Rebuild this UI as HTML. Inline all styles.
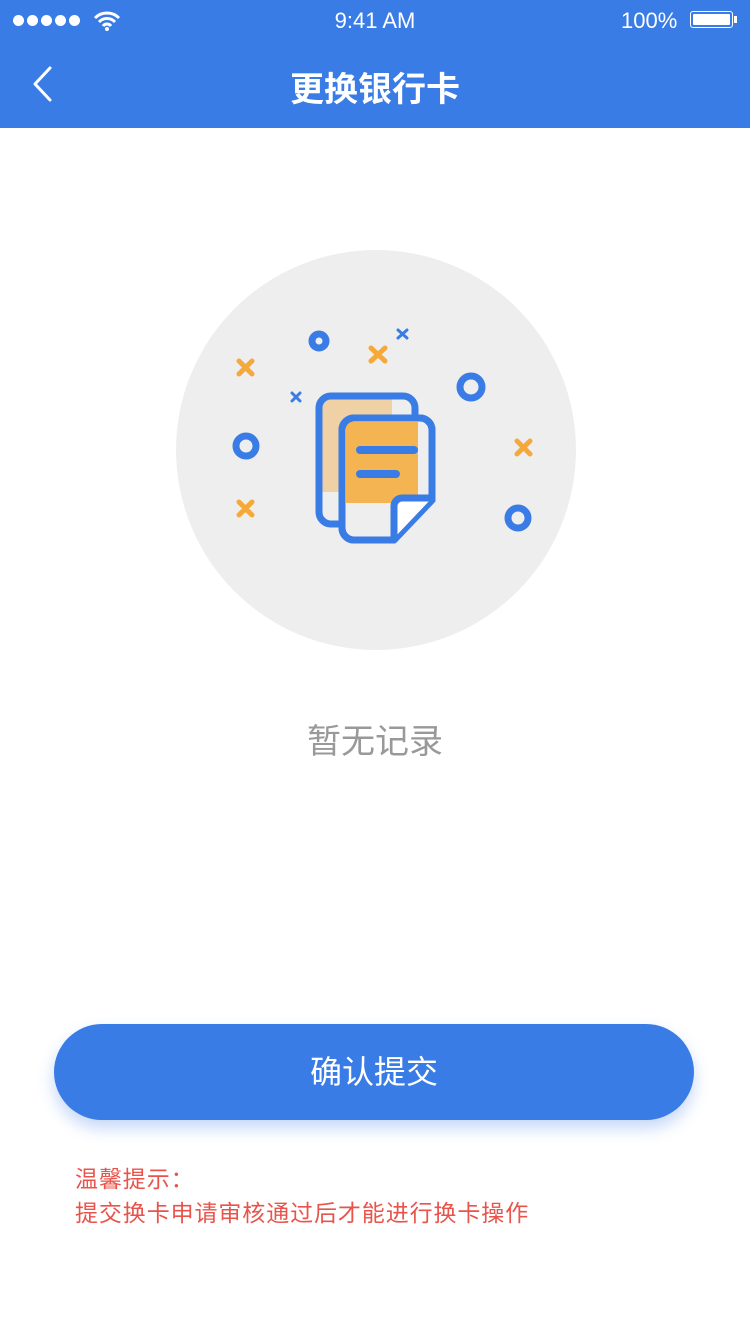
<!DOCTYPE html>
<html><head><meta charset="utf-8"><style>
body{margin:0;width:750px;height:1334px;background:#fff;font-family:"Liberation Sans","Noto Sans CJK SC",sans-serif;position:relative;overflow:hidden}
.top{position:absolute;left:0;top:0;width:750px;height:128px;background:#3a7ce5;color:#fff}
.abs{position:absolute}
.d{position:absolute;top:15px;width:11px;height:11px;border-radius:50%;background:#fff}
</style></head><body>
<div class="top">
 <div class="d" style="left:13px"></div><div class="d" style="left:27px"></div><div class="d" style="left:41px"></div><div class="d" style="left:55px"></div><div class="d" style="left:69px"></div>
 <svg class="abs" style="left:93px;top:10px" width="28" height="22" viewBox="0 0 28 22"><path d="M2 8a17 17 0 0 1 24 0M6 12a11 11 0 0 1 16 0M10 16a5 5 0 0 1 8 0" stroke="#fff" stroke-width="3" fill="none"/><circle cx="14" cy="19" r="2" fill="#fff"/></svg>
 <div class="abs" style="left:0;width:750px;top:8px;text-align:center;font-size:22px">9:41 AM</div>
 <div class="abs" style="left:621px;top:8px;font-size:22px">100%</div>
 <div class="abs" style="left:690px;top:11px;width:43px;height:17px;border:1.5px solid #fff;border-radius:3px;box-sizing:border-box;padding:2px"><div style="background:#fff;height:100%;border-radius:1px"></div></div>
 <div class="abs" style="left:734px;top:16px;width:3px;height:7px;background:#fff"></div>
 <svg class="abs" style="left:30px;top:66px" width="24" height="36"><path d="M20 2L5 18L20 34" stroke="#fff" stroke-width="3" fill="none" stroke-linecap="round" stroke-linejoin="round"/></svg>
 <div class="abs" style="left:0;width:750px;top:62px;text-align:center;font-size:34px;font-weight:bold">更换银行卡</div>
</div>
<svg class="abs" style="left:0;top:0" width="750" height="700">
 <circle cx="376" cy="450" r="200" fill="#eeeeee"/>
 <g stroke="#f5a93a" stroke-width="5" stroke-linecap="round">
  <path d="M239 361l13 13M252 361l-13 13M371 348l14 13M385 348l-14 13M239 502l13 13M252 502l-13 13M517 441l13 13M530 441l-13 13"/>
 </g>
 <g stroke="#3a7ce5" stroke-width="3" stroke-linecap="round">
  <path d="M398 330l9 8M407 330l-9 8M292 393l8 8M300 393l-8 8"/>
 </g>
 <g fill="none" stroke="#3a7ce5" stroke-width="7">
  <circle cx="319" cy="341" r="7"/><circle cx="471" cy="387" r="11"/><circle cx="246" cy="446" r="10"/><circle cx="518" cy="518" r="10"/>
 </g>
 <rect x="322" y="399" width="70" height="93" fill="#f0d1a5"/>
 <rect x="319" y="396" width="96" height="128" rx="12" fill="none" stroke="#3a7ce5" stroke-width="7"/>
 <path d="M354 418h66a12 12 0 0 1 12 12v70l-38 40h-40a12 12 0 0 1-12-12v-98a12 12 0 0 1 12-12z" fill="#eeeeee" stroke="#3a7ce5" stroke-width="7" stroke-linejoin="round"/>
 <rect x="346" y="422" width="72" height="81" fill="#f5b452"/>
 <path d="M354 418h66a12 12 0 0 1 12 12v70l-38 40h-40a12 12 0 0 1-12-12v-98a12 12 0 0 1 12-12z" fill="none" stroke="#3a7ce5" stroke-width="7" stroke-linejoin="round"/>
 <path d="M432 498h-30a8 8 0 0 0-8 8v32" fill="#fff" stroke="#3a7ce5" stroke-width="7" stroke-linejoin="round"/>
 <path d="M360 450h54M360 474h36" stroke="#3a7ce5" stroke-width="8" stroke-linecap="round"/>
</svg>
<div class="abs" style="left:0;width:750px;top:714px;text-align:center;font-size:34px;color:#999">暂无记录</div>
<div class="abs" style="left:54px;top:1024px;width:640px;height:96px;border-radius:48px;background:#3a7ce5;box-shadow:0 8px 16px rgba(58,124,229,0.3);color:#fff;font-size:32px;text-align:center;line-height:96px">确认提交</div>
<div class="abs" style="left:75px;top:1162px;font-size:23px;color:#e8544b;line-height:34px;letter-spacing:0.9px">温馨提示：<br>提交换卡申请审核通过后才能进行换卡操作</div>
</body></html>
